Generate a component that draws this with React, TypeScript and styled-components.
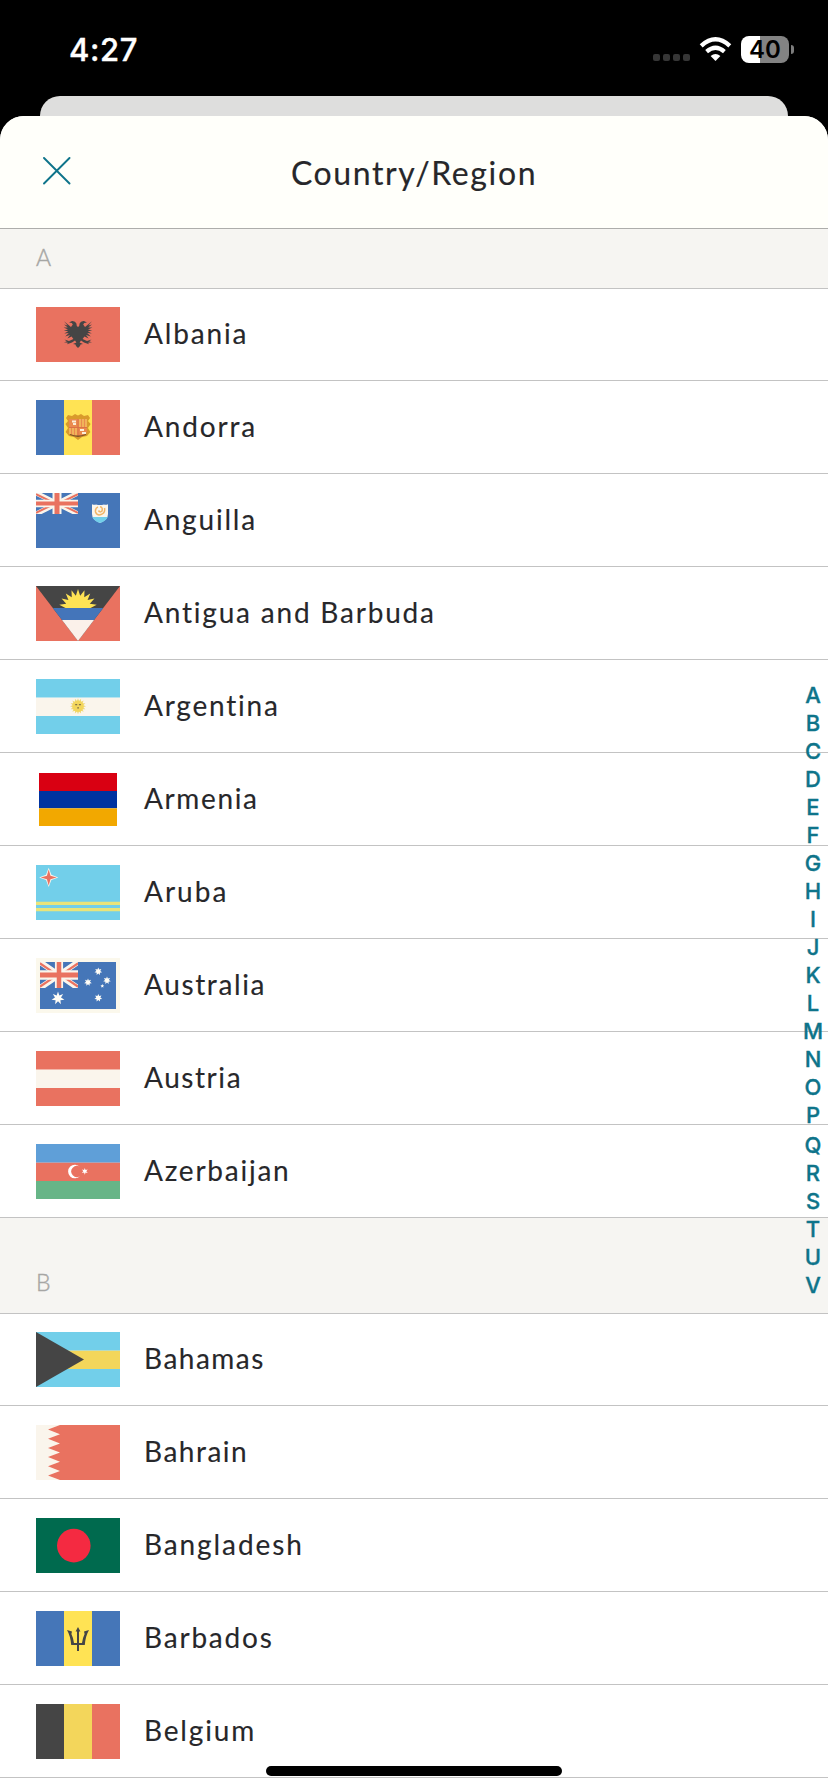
import React from "react";
import styled, { createGlobalStyle } from "styled-components";

const Global = createGlobalStyle`
  * { box-sizing: border-box; }
  body { margin: 0; background: #000; }
`;

const RED = "#e97260";
const BLUE = "#4576b8";
const SKY = "#72cfea";
const YELLOW = "#ffe354";
const GOLD = "#f3d65b";
const CREAM = "#faf5ec";
const DARK = "#454545";

const Screen = styled.div`
  position: relative;
  width: 828px;
  height: 1792px;
  overflow: hidden;
  display: flex;
  flex-direction: column;
  background: #000;
  color: #27272a;
  font-family: Lato, "Liberation Sans", sans-serif;
`;

const StatusBar = styled.div`
  flex: none;
  height: 96px;
  display: flex;
  align-items: flex-start;
  justify-content: space-between;
  padding: 36px 34px 0 69px;
`;

const Clock = styled.div`
  font: 500 31px/28px Inter, sans-serif;
  letter-spacing: 0.6px;
  color: #fff;
  -webkit-text-stroke: 0.4px #fff;
`;

const StatusIcons = styled.div`
  display: flex;
  align-items: flex-start;
  height: 28px;
`;

const Dots = styled.div`
  display: flex;
  gap: 3px;
  padding-top: 18px;
  margin-right: 9px;
`;

const Dot = styled.span`
  width: 7px;
  height: 7px;
  border-radius: 2px;
  background: #363636;
`;

const WifiSvg = styled.svg`
  display: block;
  width: 33px;
  height: 26px;
  margin-right: 9px;
`;

const Battery = styled.div`
  width: 48px;
  height: 27px;
  border-radius: 8px;
  background: linear-gradient(to right, #fff 19px, #838383 19px);
  color: #000;
  font: 600 24px/28px Inter, sans-serif;
  text-align: center;
`;

const BatteryCap = styled.span`
  width: 3px;
  height: 9px;
  margin: 9px 0 0 2px;
  border-radius: 0 4px 4px 0;
  background: #7c7c7c;
`;

const BackCard = styled.div`
  flex: none;
  height: 20px;
  margin: 0 40px;
  border-radius: 20px 20px 0 0;
  background: #dededd;
`;

const Sheet = styled.div`
  flex: 1;
  border-radius: 24px 24px 0 0;
  overflow: hidden;
  background: #fff;
`;

const SheetHeader = styled.header`
  height: 113px;
  display: grid;
  grid-template-columns: 100px 1fr 100px;
  background: #fffffa;
  border-bottom: 1px solid #adadab;
`;

const CloseButton = styled.button`
  width: 28px;
  height: 28px;
  margin: 41px 0 0 43px;
  padding: 0;
  border: 0;
  background: none;
  svg { display: block; }
`;

const Title = styled.h1`
  margin: 38px 0 0;
  font-size: 32px;
  line-height: 38px;
  font-weight: 400;
  letter-spacing: 1.6px;
  text-align: center;
  -webkit-text-stroke: 0.15px currentColor;
`;

const SectionHeader = styled.h2<{ $height: number }>`
  display: flex;
  align-items: flex-end;
  height: ${(p) => p.$height}px;
  margin: 0;
  padding: 0 0 16px 36px;
  background: #f6f5f2;
  border-bottom: 1px solid #c3c3c3;
  color: #a6a6a4;
  font-size: 23px;
  line-height: 30px;
  font-weight: 300;
  -webkit-text-stroke: 0.4px currentColor;
`;

const List = styled.ul`
  margin: 0;
  padding: 0;
  list-style: none;
`;

const Row = styled.li`
  display: flex;
  align-items: flex-end;
  gap: 24px;
  height: 93px;
  padding: 0 36px 18px;
  border-bottom: 1px solid #c3c3c3;
  &:first-child { height: 92px; }
`;

const FlagSvg = styled.svg`
  display: block;
  flex: none;
  width: 84px;
  height: 55px;
`;

const Name = styled.span<{ $spacing: number }>`
  padding-bottom: 11px;
  font-size: 28px;
  line-height: 36px;
  letter-spacing: ${(p) => p.$spacing}px;
  white-space: nowrap;
  -webkit-text-stroke: 0.12px currentColor;
`;

const IndexBar = styled.nav`
  position: absolute;
  top: 681px;
  right: 0;
  width: 30px;
  display: flex;
  flex-direction: column;
  color: #0e748a;
  font: 500 22px/28px Inter, sans-serif;
  text-align: center;
  -webkit-text-stroke: 0.35px currentColor;
`;

const IndexLetter = styled.span<{ $gap?: boolean }>`
  height: 28px;
  margin-top: ${(p) => (p.$gap ? 2 : 0)}px;
`;

const HomeIndicator = styled.div`
  position: absolute;
  left: 266px;
  bottom: 16px;
  width: 296px;
  height: 10px;
  border-radius: 5px;
  background: #000;
`;

function starPoints(cx: number, cy: number, n: number, outer: number, inner: number) {
  return Array.from({ length: n * 2 }, (_, i) => {
    const r = i % 2 ? inner : outer;
    const a = (Math.PI * i) / n - Math.PI / 2;
    return `${(cx + r * Math.cos(a)).toFixed(2)},${(cy + r * Math.sin(a)).toFixed(2)}`;
  }).join(" ");
}

const Horizontal = ({ colors }: { colors: string[] }) => (
  <>
    <rect width="84" height="18.7" fill={colors[0]} />
    <rect y="18.7" width="84" height="18.3" fill={colors[1]} />
    <rect y="37" width="84" height="18" fill={colors[2]} />
  </>
);

const Vertical = ({ colors }: { colors: string[] }) => (
  <>
    {colors.map((c, i) => (
      <rect key={i} x={i * 28} width="28" height="55" fill={c} />
    ))}
  </>
);

const UnionJack = ({ x, y, w, h }: { x: number; y: number; w: number; h: number }) => (
  <svg x={x} y={y} width={w} height={h} viewBox="0 0 42 21" preserveAspectRatio="none">
    <path d="M0 0L42 21M42 0L0 21" stroke={CREAM} strokeWidth="5" />
    <path d="M0 1.2L17 9.5M42 19.8L25 11.5M42 1.2L25 9.5M0 19.8L17 11.5" stroke={RED} strokeWidth="2" />
    <path d="M21 0V21" stroke={CREAM} strokeWidth="9" />
    <path d="M0 10.5H42" stroke={CREAM} strokeWidth="7.6" />
    <path d="M21 0V21" stroke={RED} strokeWidth="5" />
    <path d="M0 10.5H42" stroke={RED} strokeWidth="4.2" />
  </svg>
);

const EAGLE =
  "M42 20L43.2 19L43.6 16.5Q44.6 13.8 48 14L51 15.5L48.2 16L47.2 17.5L49 20L56 14.2L52.4 18.4L56 17.4L52.2 20.4L56.4 20.6L52 22.4L56.2 23.6L51.8 24.2L55.8 26.6L51.2 26L54.8 29.4L50 28L52.6 31.4L48.4 29.6L46.6 32L51 34L55.5 32.4L53.2 34.6L56 35.2L52 35.8L53 37.2L48 35.4L45 33.6L43.6 35.6L47 37L44.5 37.6L44 39L42 41Z";

const flags: Record<string, React.ReactNode> = {
  Albania: (
    <>
      <rect width="84" height="55" fill={RED} />
      <path d={EAGLE} fill={DARK} />
      <path d={EAGLE} fill={DARK} transform="translate(84 0) scale(-1 1)" />
    </>
  ),
  Andorra: (
    <>
      <Vertical colors={[BLUE, YELLOW, RED]} />
      <path
        d="M36 16L39 14L42 15.5L45 14L48 16L52 15L54 18L52 21L54.6 24L52 28L54.4 32L51 36L46 37L42 40L38 37L33 36L29.6 32L32 28L29.4 24L32 21L30 18L32 15Z"
        fill="#d99a2b"
      />
      <path d="M33 19H51V31Q51 36 42 37Q33 36 33 31Z" fill="#ea8a4e" />
      <path d="M44 19V27M47 19V27M50 19V27M34 28V34M37 28V35M40 28V36" stroke="#f6cf62" strokeWidth="1.2" />
      <path d="M36 21.5H40M37 24H40M44 30H48M46 33H50" stroke="#fbeed8" strokeWidth="1.8" />
      <path d="M33 27.5H51M42 19V36" stroke="#d96f45" strokeWidth="0.9" />
      <path d="M34 34.5Q42 38 50 34.5" stroke="#7b5424" strokeWidth="1.3" fill="none" />
    </>
  ),
  Anguilla: (
    <>
      <rect width="84" height="55" fill={BLUE} />
      <UnionJack x={0} y={0} w={42} h={21} />
      <path d="M56 11.2Q58.5 12.4 60 11.4Q64 12.6 68 11.4Q69.5 12.4 72 11.2V21Q72 27 64 30Q56 27 56 21Z" fill={CREAM} />
      <path d="M56.4 24H71.6Q70 28 64 30Q58 28 56.4 24Z" fill={SKY} />
      <path
        d="M62 14Q59 15 59.5 19Q61 23 65 21.5Q69.5 20 68.5 15M64 13.8Q67 14 66 18Q64 20 62.5 17.5"
        fill="none"
        stroke="#f1b566"
        strokeWidth="1.5"
      />
    </>
  ),
  "Antigua and Barbuda": (
    <>
      <rect width="84" height="55" fill={RED} />
      <path d="M0 0H84L42 55Z" fill={DARK} />
      <svg width="84" height="22">
        <polygon points={starPoints(42, 22, 18, 19, 12.5)} fill={YELLOW} />
      </svg>
      <path d="M16.8 22H67.2L58 34H26Z" fill="#4475ba" />
      <path d="M26 34H58L42 55Z" fill="#fbf1ea" />
    </>
  ),
  Argentina: (
    <>
      <Horizontal colors={[SKY, CREAM, SKY]} />
      <polygon points={starPoints(42, 27.2, 16, 8, 5.4)} fill="#f0d97a" />
      <circle cx="42" cy="27.2" r="5.6" fill="#f3d65b" />
      <path d="M39.2 25.6H41.2M42.9 25.6H44.9M41.2 28.8H43" stroke="#857447" strokeWidth="1.3" />
    </>
  ),
  Armenia: (
    <>
      <rect x="3" y="1" width="78" height="18" fill="#d90012" />
      <rect x="3" y="19" width="78" height="17.3" fill="#0033a0" />
      <rect x="3" y="36.3" width="78" height="17.7" fill="#f2a800" />
    </>
  ),
  Aruba: (
    <>
      <rect width="84" height="55" fill={SKY} />
      <path d="M0 38.3H84M0 44.7H84" stroke="#e9e47a" strokeWidth="3.3" />
      <polygon points={starPoints(12.7, 12.4, 4, 9.6, 3.8)} fill={CREAM} />
      <polygon points={starPoints(12.7, 12.4, 4, 8, 2.5)} fill={RED} />
    </>
  ),
  Australia: (
    <>
      <rect width="84" height="55" fill="#fbf8ec" />
      <rect x="4" y="4" width="76" height="47" fill={BLUE} />
      <UnionJack x={4} y={4} w={38} h={26} />
      <g fill="#fffdf6">
        <polygon points={starPoints(22, 40.2, 7, 6.6, 3.1)} />
        <polygon points={starPoints(62.3, 13.4, 7, 3.9, 2)} />
        <polygon points={starPoints(52, 24.3, 7, 3.9, 2)} />
        <polygon points={starPoints(71, 22.4, 7, 3.9, 2)} />
        <polygon points={starPoints(66.3, 28, 5, 2, 0.9)} />
        <polygon points={starPoints(62.3, 40, 7, 4, 2.1)} />
      </g>
    </>
  ),
  Austria: <Horizontal colors={[RED, CREAM, RED]} />,
  Azerbaijan: (
    <>
      <Horizontal colors={["#5f9fd8", RED, "#67b587"]} />
      <path d="M44 23A6.8 6.8 0 1 0 44 32A5.5 5.5 0 1 1 44 23Z" fill="#fff" />
      <polygon points={starPoints(48.8, 27.3, 6, 3.4, 1.5)} fill="#fff" />
    </>
  ),
  Bahamas: (
    <>
      <Horizontal colors={[SKY, GOLD, SKY]} />
      <path d="M0 0L48 27.5L0 55Z" fill={DARK} />
    </>
  ),
  Bahrain: (
    <>
      <rect width="84" height="55" fill={RED} />
      <path
        d="M0 0H24L12 4.6L24 9.2L12 13.8L24 18.4L12 23L24 27.5L12 32.1L24 36.7L12 41.3L24 45.9L12 50.5L24 55H0Z"
        fill={CREAM}
      />
    </>
  ),
  Bangladesh: (
    <>
      <rect width="84" height="55" fill="#006a4e" />
      <circle cx="37.8" cy="27.6" r="16.8" fill="#f42a41" />
    </>
  ),
  Barbados: (
    <>
      <Vertical colors={[BLUE, YELLOW, BLUE]} />
      <path
        d="M42 16L44.4 20.5H43V32H46Q46.6 27 48.6 23L48 20.5L53 19Q49.5 25 48.8 34H43V40H41V34H35.2Q34.5 25 31 19L36 20.5L35.4 23Q37.4 27 38 32H41V20.5H39.6Z"
        fill={DARK}
      />
    </>
  ),
  Belgium: <Vertical colors={[DARK, GOLD, RED]} />,
};

type Country = { name: string; spacing: number };

const sections: { letter: string; height: number; rows: Country[] }[] = [
  {
    letter: "A",
    height: 60,
    rows: [
      { name: "Albania", spacing: 1.83 },
      { name: "Andorra", spacing: 1.83 },
      { name: "Anguilla", spacing: 1.8 },
      { name: "Antigua and Barbuda", spacing: 1.8 },
      { name: "Argentina", spacing: 1.78 },
      { name: "Armenia", spacing: 1.62 },
      { name: "Aruba", spacing: 2 },
      { name: "Australia", spacing: 1.62 },
      { name: "Austria", spacing: 1.56 },
      { name: "Azerbaijan", spacing: 1.76 },
    ],
  },
  {
    letter: "B",
    height: 96,
    rows: [
      { name: "Bahamas", spacing: 1.5 },
      { name: "Bahrain", spacing: 1.5 },
      { name: "Bangladesh", spacing: 1.9 },
      { name: "Barbados", spacing: 1.8 },
      { name: "Belgium", spacing: 1.83 },
    ],
  },
];

export default function App() {
  return (
    <Screen>
      <Global />
      <StatusBar>
        <Clock>4:27</Clock>
        <StatusIcons>
          <Dots>
            <Dot />
            <Dot />
            <Dot />
            <Dot />
          </Dots>
          <WifiSvg viewBox="0 0 33 26" fill="none" stroke="#fff">
            <path d="M2.2 9.8Q16.5 -3.2 30.8 9.8" strokeWidth="4.4" />
            <path d="M7.6 15.6Q16.5 7.8 25.4 15.6" strokeWidth="4.2" />
            <path d="M11.6 20Q16.5 16 21.4 20L16.5 25Z" fill="#fff" stroke="none" />
          </WifiSvg>
          <Battery>40</Battery>
          <BatteryCap />
        </StatusIcons>
      </StatusBar>
      <BackCard />
      <Sheet>
        <SheetHeader>
          <CloseButton aria-label="Close">
            <svg width="28" height="28" fill="none" stroke="#0e748a" strokeWidth="1.9" strokeLinecap="round">
              <path d="M1 1L26.5 26.5M26.5 1L1 26.5" />
            </svg>
          </CloseButton>
          <Title>Country/Region</Title>
        </SheetHeader>
        {sections.map((s) => (
          <section key={s.letter}>
            <SectionHeader $height={s.height}>{s.letter}</SectionHeader>
            <List>
              {s.rows.map(({ name, spacing }) => (
                <Row key={name}>
                  <FlagSvg viewBox="0 0 84 55">{flags[name]}</FlagSvg>
                  <Name $spacing={spacing}>{name}</Name>
                </Row>
              ))}
            </List>
          </section>
        ))}
      </Sheet>
      <IndexBar>
        {"ABCDEFGHIJKLMNOPQRSTUV".split("").map((l) => (
          <IndexLetter key={l} $gap={l === "Q"}>
            {l}
          </IndexLetter>
        ))}
      </IndexBar>
      <HomeIndicator />
    </Screen>
  );
}
